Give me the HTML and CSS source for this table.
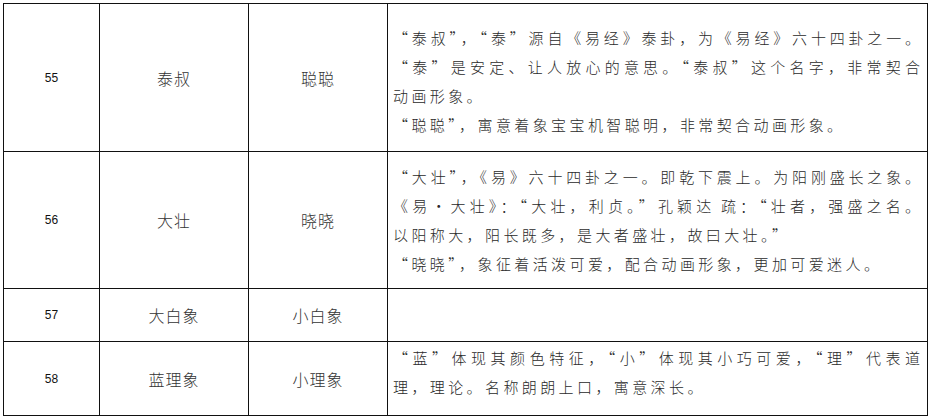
FILE: index.html
```html
<!DOCTYPE html>
<html lang="zh-CN">
<head>
<meta charset="utf-8">
<title>名称释义</title>
<link rel="stylesheet" href="styles.css">
</head>
<body>
<table class="names">
  <colgroup>
    <col class="c-no">
    <col class="c-name">
    <col class="c-nick">
    <col class="c-desc">
  </colgroup>
  <tr class="r55">
    <td class="no">55</td>
    <td class="nm">泰叔</td>
    <td class="nm">聪聪</td>
    <td class="desc">
      <div class="ln fill">“泰叔”，“泰”源自《易经》泰卦，为《易经》六十四卦之一。</div>
      <div class="ln fill">“泰”是安定、让人放心的意思。“泰叔”这个名字，非常契合</div>
      <div class="ln">动画形象。</div>
      <div class="ln">“聪聪”，寓意着象宝宝机智聪明，非常契合动画形象。</div>
    </td>
  </tr>
  <tr class="r56">
    <td class="no">56</td>
    <td class="nm">大壮</td>
    <td class="nm">晓晓</td>
    <td class="desc up">
      <div class="ln fill">“大壮”，《易》六十四卦之一。即乾下震上。为阳刚盛长之象。</div>
      <div class="ln fill">《易·大壮》：“大壮，利贞。”孔颖达<span class="sp"> </span>疏：“壮者，强盛之名。</div>
      <div class="ln">以阳称大，阳长既多，是大者盛壮，故曰大壮。”</div>
      <div class="ln">“晓晓”，象征着活泼可爱，配合动画形象，更加可爱迷人。</div>
    </td>
  </tr>
  <tr class="r57">
    <td class="no">57</td>
    <td class="nm">大白象</td>
    <td class="nm">小白象</td>
    <td class="desc"></td>
  </tr>
  <tr class="r58">
    <td class="no">58</td>
    <td class="nm">蓝理象</td>
    <td class="nm">小理象</td>
    <td class="desc top">
      <div class="ln fill">“蓝”体现其颜色特征，“小”体现其小巧可爱，“理”代表道</div>
      <div class="ln">理，理论。名称朗朗上口，寓意深长。</div>
    </td>
  </tr>
</table>
</body>
</html>
```

FILE: styles.css
```css
html, body {
  margin: 0;
  padding: 0;
  background: #ffffff;
}

body {
  font-family: "Noto Sans CJK SC", "Noto Sans", sans-serif;
  color: #222;
}

.names {
  margin: 3px 0 0 3px;
  border-collapse: collapse;
  table-layout: fixed;
  width: 924px;
}

.c-no { width: 96px; }
.c-name { width: 149px; }
.c-nick { width: 139px; }
.c-desc { width: 540px; }

.names td {
  border: 1px solid #111;
  padding: 0;
  vertical-align: middle;
}

.r55 { height: 148px; }
.r56 { height: 137px; }
.r57 { height: 53px; }
.r58 { height: 74px; }

.no {
  font-family: "Liberation Sans", Arial, sans-serif;
  font-size: 12px;
  text-align: center;
  color: #111;
}

.nm {
  font-size: 16px;
  font-weight: 300;
  letter-spacing: 1px;
  text-align: center;
  color: #333;
}

.desc {
  padding: 6px 5px 0 5px !important;
  font-size: 15px;
  font-weight: 300;
  letter-spacing: 3.4px;
  line-height: 29px;
  color: #2a2a2a;
  font-feature-settings: "fwid";
}

.desc.up {
  padding-top: 0 !important;
}

.desc.top {
  vertical-align: top !important;
  padding-top: 1px !important;
}

.ln {
  white-space: nowrap;
  text-align: left;
}

.ln.fill {
  text-align: justify;
  text-align-last: justify;
  letter-spacing: 2px;
}

.sp {
  font-feature-settings: normal;
  letter-spacing: 0;
}
```
